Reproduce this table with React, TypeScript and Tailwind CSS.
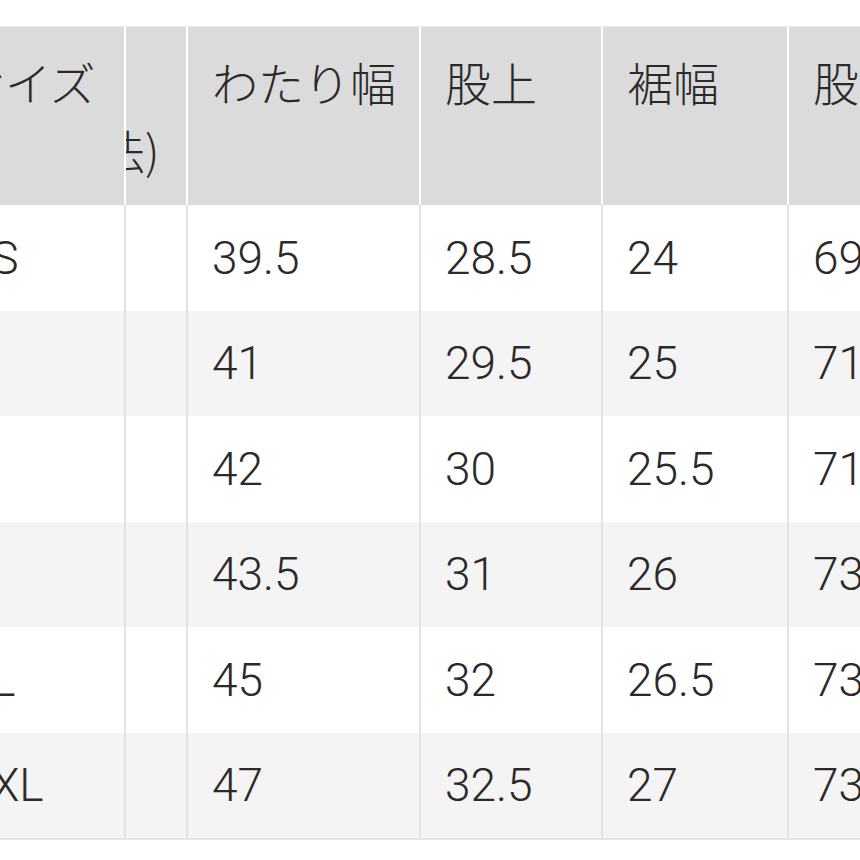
import * as React from "react";

/**
 * サイズ表 — 左端と右端が切れた状態のスクリーンショット再現。
 */

interface SizeRow {
  size: string;
  watari: string;
  mataue: string;
  suso: string;
  matashita: string;
}

const ROWS: SizeRow[] = [
  { size: "XS", watari: "39.5", mataue: "28.5", suso: "24", matashita: "69" },
  { size: "S", watari: "41", mataue: "29.5", suso: "25", matashita: "71" },
  { size: "M", watari: "42", mataue: "30", suso: "25.5", matashita: "71" },
  { size: "L", watari: "43.5", mataue: "31", suso: "26", matashita: "73" },
  { size: "XL", watari: "45", mataue: "32", suso: "26.5", matashita: "73" },
  { size: "XXL", watari: "47", mataue: "32.5", suso: "27", matashita: "73" },
];

const FONT = "[font-family:Roboto,'Liberation_Sans',sans-serif] font-light";
const JP = "[font-family:'Noto_Sans_CJK_JP',sans-serif] font-light";

export default function App() {
  return (
    <div
      className={`h-[860px] w-[860px] overflow-hidden bg-white pt-[26px] text-[46px] leading-[68px] text-[#2a2a2a] ${FONT}`}
    >
      <div className="ml-[-136px] w-[1200px]">
        {/* header */}
        <div className={`flex h-[179px] border-t border-[#eaeaea] bg-[#dbdbdb] text-[#2a2a2a] ${JP}`}>
          <div className="w-[262px] shrink-0 border-r-2 border-white pl-[95px] pt-[20px] whitespace-nowrap">
            サイズ
          </div>
          <div className="w-[62px] shrink-0 overflow-hidden border-r-2 border-white pt-[20px] whitespace-nowrap">
            <div className="h-[68px]" />
            <div className="ml-[-73px]">寸法)</div>
          </div>
          <div className="w-[233px] shrink-0 border-r-2 border-white pl-[24px] pt-[20px] whitespace-nowrap">
            わたり幅
          </div>
          <div className="w-[182px] shrink-0 border-r-2 border-white pl-[24px] pt-[20px] whitespace-nowrap">
            股上
          </div>
          <div className="w-[186px] shrink-0 border-r-2 border-white pl-[24px] pt-[20px] whitespace-nowrap">
            裾幅
          </div>
          <div className="w-[200px] shrink-0 pl-[24px] pt-[20px] whitespace-nowrap">股下</div>
        </div>

        {/* body */}
        <div className="border-b-2 border-[#e4e4e4]">
          {ROWS.map((r, i) => (
            <div
              key={r.size}
              className={`flex h-[105.5px] items-stretch ${i % 2 === 1 ? "bg-[#f4f4f4]" : "bg-white"}`}
            >
              <div className="flex w-[262px] shrink-0 items-center border-r-2 border-[#e2e2e2] pl-[99px]">
                {r.size}
              </div>
              <div className="w-[62px] shrink-0 border-r-2 border-[#e2e2e2]" />
              <div className="flex w-[233px] shrink-0 items-center border-r-2 border-[#e2e2e2] pl-[24px]">
                {r.watari}
              </div>
              <div className="flex w-[182px] shrink-0 items-center border-r-2 border-[#e2e2e2] pl-[24px]">
                {r.mataue}
              </div>
              <div className="flex w-[186px] shrink-0 items-center border-r-2 border-[#e2e2e2] pl-[24px]">
                {r.suso}
              </div>
              <div className="flex w-[200px] shrink-0 items-center pl-[24px]">{r.matashita}</div>
            </div>
          ))}
        </div>
      </div>
    </div>
  );
}
